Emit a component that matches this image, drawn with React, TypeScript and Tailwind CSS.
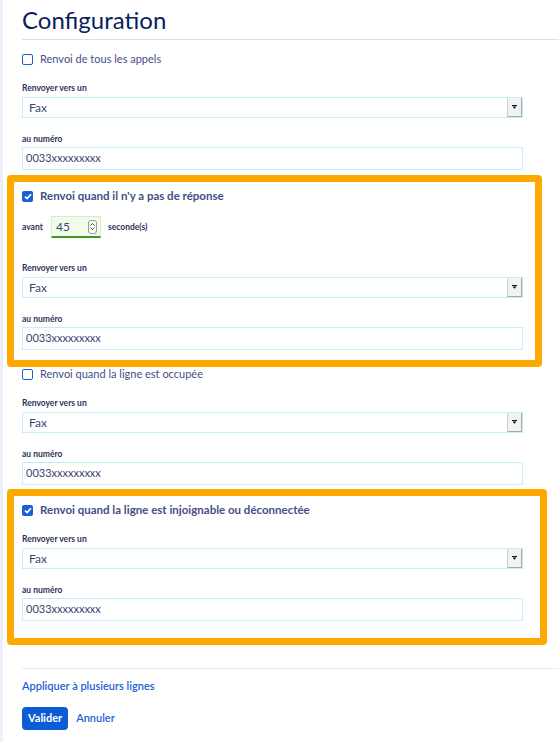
import React from 'react';

const font = { fontFamily: 'Lato, "Open Sans", sans-serif' };

const CheckBox = ({ checked }: { checked?: boolean }) =>
  checked ? (
    <span className="w-[11px] h-[11px] rounded-[2px] bg-[#1a5fd6] flex items-center justify-center shrink-0">
      <svg width="8" height="7" viewBox="0 0 8 7">
        <path d="M1 3.6 L3.1 5.6 L7 1.2" fill="none" stroke="#fff" strokeWidth="1.7" />
      </svg>
    </span>
  ) : (
    <span className="w-[11px] h-[11px] rounded-[2px] border-[1.5px] border-[#1a5fd6] bg-white shrink-0" />
  );

const Label = ({ children, className = '' }: { children: React.ReactNode; className?: string }) => (
  <div className={`h-[12px] leading-[12px] text-[8.5px] font-bold text-[#2c3458] ${className}`}>{children}</div>
);

const SelectBox = () => (
  <div className="mt-[3px] w-[501px] h-[21px] border border-[#c4eefa] bg-white flex items-center">
    <span className="flex-1 pl-[6px] text-[12px] text-[#3d4675]">Fax</span>
    <span className="w-[15px] h-[19px] bg-[#f3f3f3] border-l border-[#cfcfcf] border-r border-b border-r-[#a8a8a8] border-b-[#a8a8a8] flex items-center justify-center">
      <svg width="5" height="4" viewBox="0 0 5 4">
        <rect x="0" y="0" width="5" height="1" fill="#111" />
        <path d="M0.5 1.5 H4.5 L2.5 3.7 Z" fill="#111" />
      </svg>
    </span>
  </div>
);

const NumberInput = () => (
  <div className="mt-[2px] w-[501px] h-[23px] border border-[#c4eefa] bg-white flex items-center pl-[3px] text-[11px] text-[#3a4470]">
    0033xxxxxxxxx
  </div>
);

const Fields = () => (
  <>
    <Label className="mt-[15px]">Renvoyer vers un</Label>
    <SelectBox />
    <Label className="mt-[15px]">au numéro</Label>
    <NumberInput />
  </>
);

const CheckRow = ({ checked, bold, children }: { checked?: boolean; bold?: boolean; children: React.ReactNode }) => (
  <div className="h-[16px] flex items-center gap-[7px]">
    <CheckBox checked={checked} />
    <span className={`text-[#454e86] ${bold ? 'font-bold text-[11.5px]' : 'text-[11px]'}`}>{children}</span>
  </div>
);

export default function App() {
  return (
    <div className="min-h-screen bg-white border-l-[3px] border-[#eceef9] pl-[19px]" style={font}>
      <h1 className="pt-[5px] h-[39px] text-[24px] leading-[30px] text-[#0b1f5c]">Configuration</h1>
      <div className="border-t border-[#dedede]" />

      <div className="mt-[11px]">
        <CheckRow>Renvoi de tous les appels</CheckRow>
      </div>
      <Fields />

      <div className="mt-[5px] -ml-[15px] w-[535px] border-[7px] border-[#ffa800] rounded-[4px] pl-[8px] pt-[6px] pb-[10px]">
        <CheckRow checked bold>Renvoi quand il n'y a pas de réponse</CheckRow>
        <div className="mt-[12px] flex items-center h-[22px]">
          <span className="text-[8.5px] font-bold text-[#2c3458] w-[29px]">avant</span>
          <div className="w-[50px] h-[22px] bg-[#f1fbea] border border-[#d4efc4] border-b-2 border-b-[#3c9a1c] flex items-center pl-[4px] pr-[3px]">
            <span className="flex-1 text-[12px] text-[#3d4675]">45</span>
            <span className="w-[9px] h-[14px] rounded-[3px] border border-[#9a9a9a] bg-white flex flex-col items-center justify-center gap-[1px]">
              <svg width="5" height="3" viewBox="0 0 5 3"><path d="M0.5 2.5 L2.5 0.5 L4.5 2.5" fill="none" stroke="#333" strokeWidth="0.9" /></svg>
              <svg width="5" height="3" viewBox="0 0 5 3"><path d="M0.5 0.5 L2.5 2.5 L4.5 0.5" fill="none" stroke="#333" strokeWidth="0.9" /></svg>
            </span>
          </div>
          <span className="ml-[7px] text-[8.5px] font-bold text-[#2c3458]">seconde(s)</span>
        </div>
        <div className="mt-[24px]" />
        <Fields />
      </div>

      <div className="-mt-[1px]">
        <CheckRow>Renvoi quand la ligne est occupée</CheckRow>
      </div>
      <Fields />

      <div className="mt-[4px] -ml-[15px] w-[540px] border-[7px] border-[#ffa800] rounded-[4px] pl-[8px] pt-[6px] pb-[17px]">
        <CheckRow checked bold>Renvoi quand la ligne est injoignable ou déconnectée</CheckRow>
        <Fields />
      </div>

      <div className="mt-[23px] border-t border-[#ececec]" />
      <div className="mt-[9px] h-[16px] leading-[16px] text-[11px] font-semibold text-[#1c5fd6]">
        Appliquer à plusieurs lignes
      </div>
      <div className="mt-[13px] flex items-center gap-[8px]">
        <button className="h-[23px] px-[6px] rounded-[4px] bg-[#0b5cd5] text-white text-[11px] font-bold">Valider</button>
        <button className="text-[11px] font-semibold text-[#1c5fd6]">Annuler</button>
      </div>
    </div>
  );
}
